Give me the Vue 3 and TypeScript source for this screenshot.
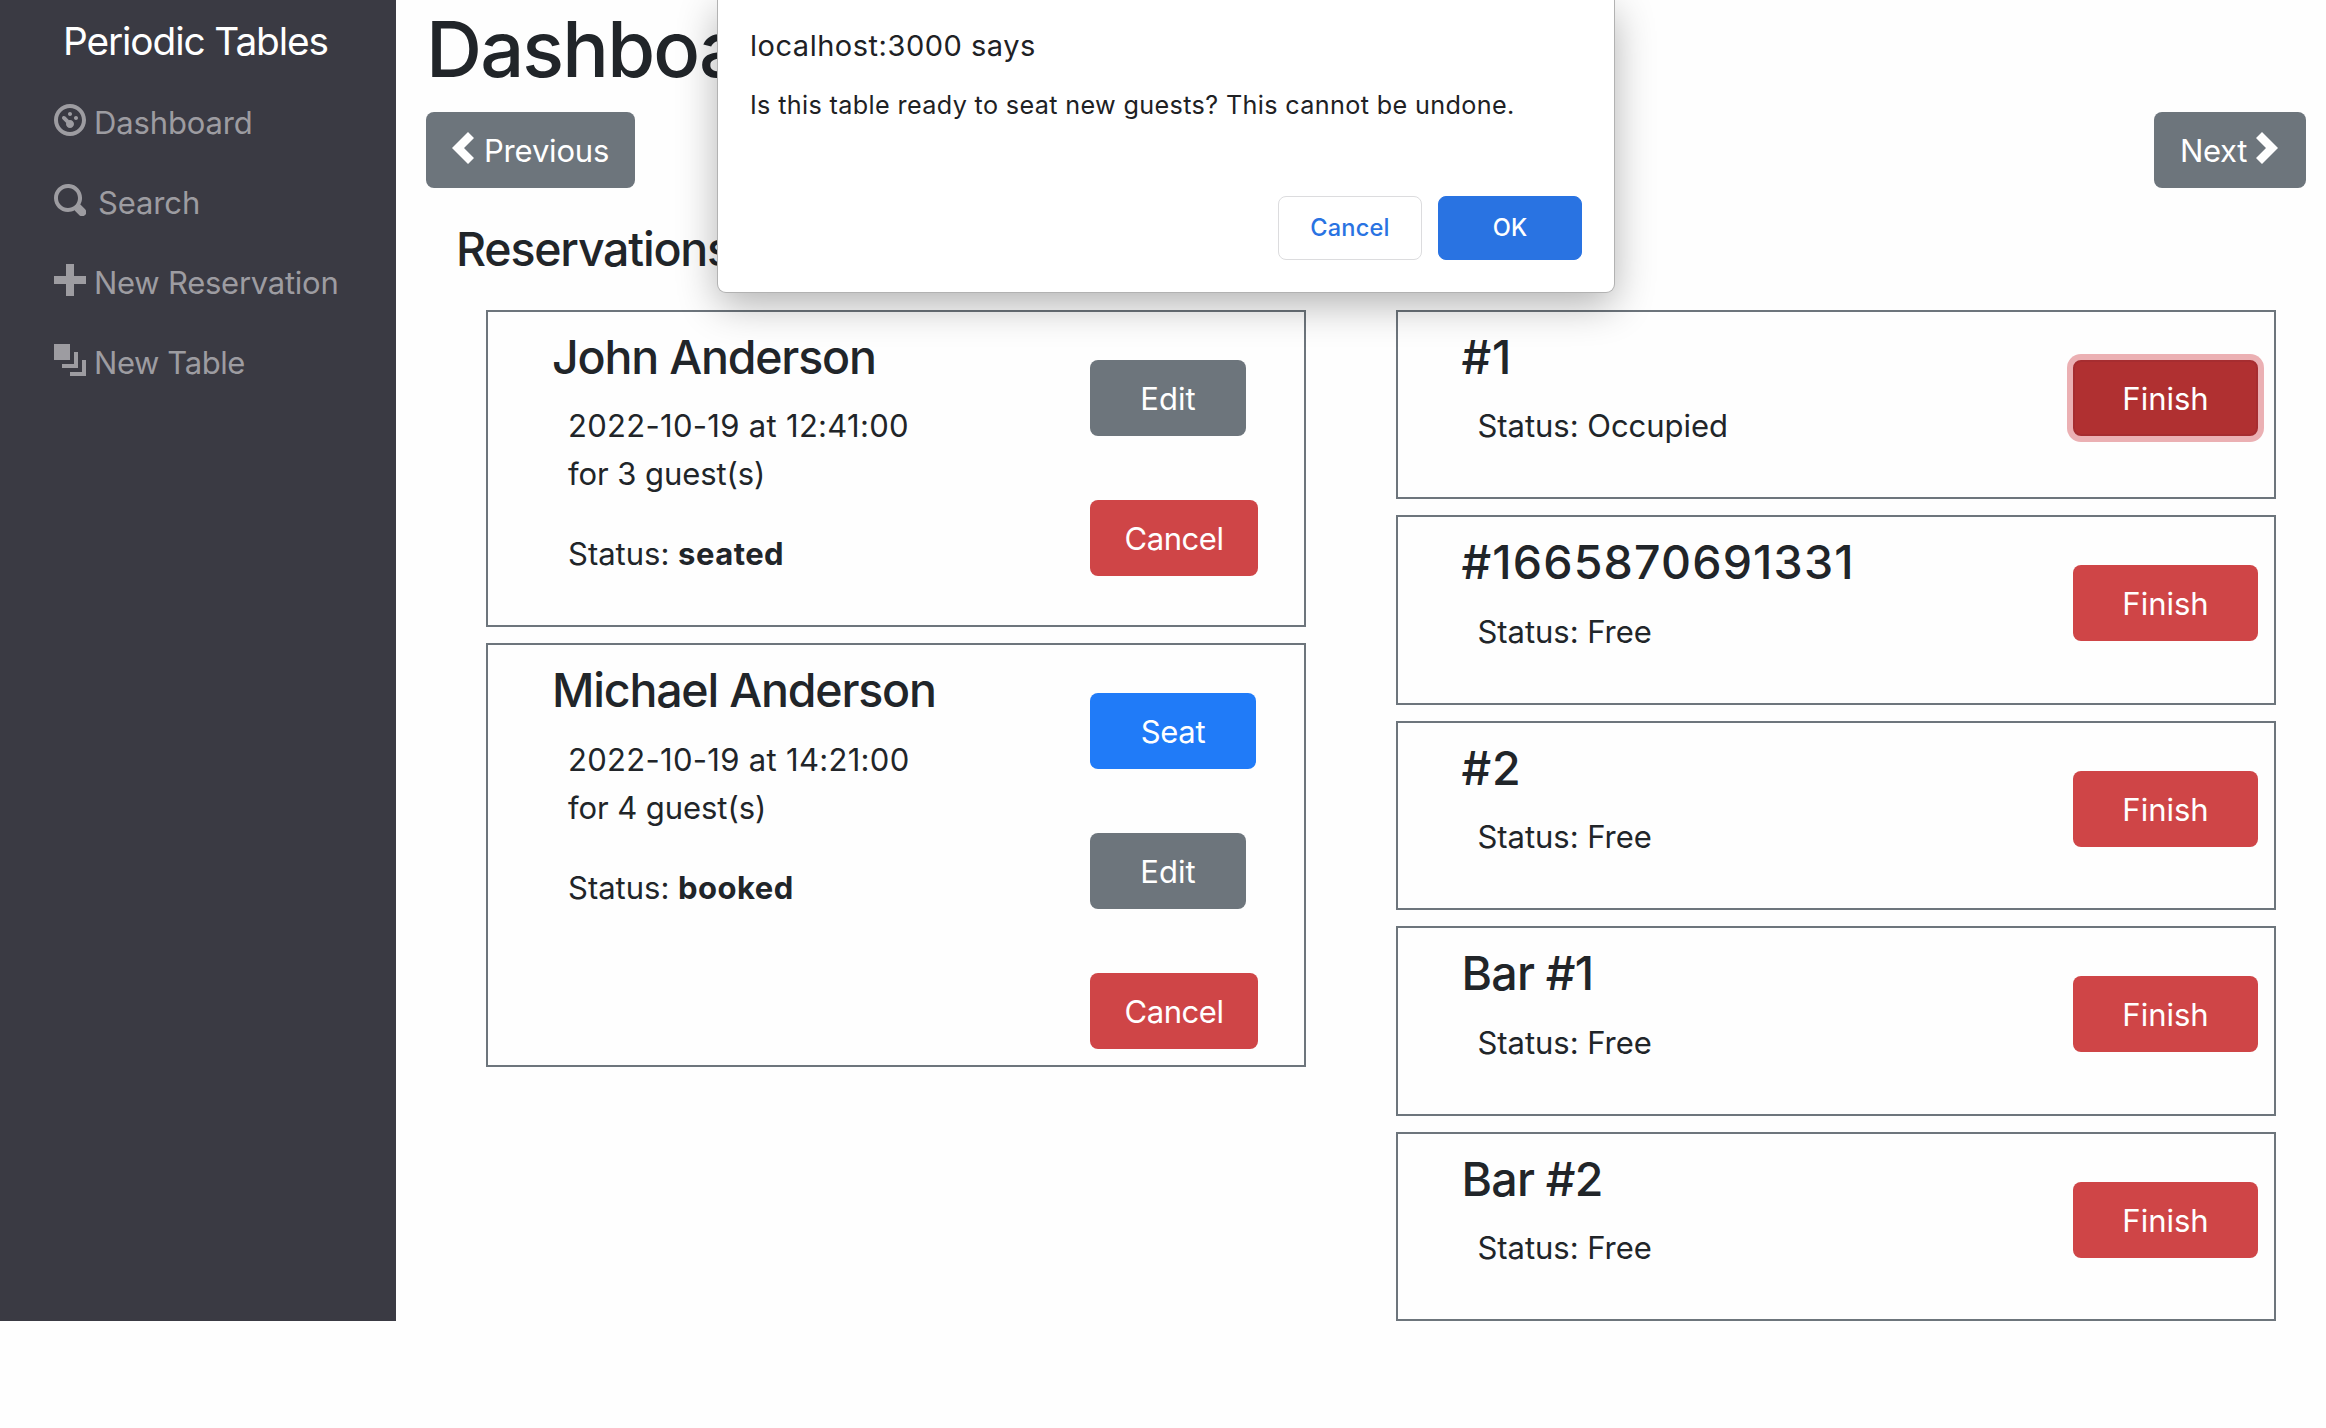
<script setup lang="ts">
interface NavItem {
  label: string
  kind: string
  path: string
}

interface Reservation {
  id: number
  name: string
  date: string
  time: string
  people: number
  status: 'booked' | 'seated'
}

interface Table {
  id: number
  name: string
  status: 'Free' | 'Occupied'
  focused?: boolean
}

const navItems: NavItem[] = [
  {
    label: 'Dashboard',
    kind: 'nav-dashboard',
    path: 'M4 0c-2.2 0-4 1.8-4 4s1.8 4 4 4 4-1.8 4-4-1.8-4-4-4zm0 1c1.66 0 3 1.34 3 3s-1.34 3-3 3-3-1.34-3-3 1.34-3 3-3zm0 1c-.28 0-.5.22-.5.5s.22.5.5.5.5-.22.5-.5-.22-.5-.5-.5zm-1.66 1a.5.5 0 0 0-.19.84l.91.91c-.02.08-.06.16-.06.25 0 .55.45 1 1 1s1-.45 1-1-.45-1-1-1c-.09 0-.17.04-.25.06l-.91-.91a.5.5 0 0 0-.44-.16.5.5 0 0 0-.06 0zm3.16 0c-.28 0-.5.22-.5.5s.22.5.5.5.5-.22.5-.5-.22-.5-.5-.5z',
  },
  {
    label: 'Search',
    kind: 'nav-search',
    path: 'M3.5 0c-1.93 0-3.5 1.57-3.5 3.5s1.57 3.5 3.5 3.5c.59 0 1.17-.14 1.66-.41a1 1 0 0 0 .13.13l1 1a1.02 1.02 0 1 0 1.44-1.44l-1-1a1 1 0 0 0-.16-.13c.27-.49.44-1.06.44-1.66 0-1.93-1.55-3.5-3.5-3.5zm.02 1c1.39 0 2.48 1.1 2.48 2.5 0 .66-.24 1.27-.66 1.72l-.03.03a1 1 0 0 0-.13.13c-.44.4-1.04.63-1.69.63-1.4 0-2.5-1.09-2.5-2.48s1.1-2.52 2.52-2.52z',
  },
  {
    label: 'New Reservation',
    kind: 'nav-reservation',
    path: 'M3 0v3h-3v2h3v3h2v-3h3v-2h-3v-3h-2z',
  },
  {
    label: 'New Table',
    kind: 'nav-table',
    path: 'M0 0v4h4v-4h-4zm5 2v3h-3v1h4v-4h-1zm2 2v3h-3v1h4v-4h-1z',
  },
]

const reservations: Reservation[] = [
  { id: 1, name: 'John Anderson', date: '2022-10-19', time: '12:41:00', people: 3, status: 'seated' },
  { id: 2, name: 'Michael Anderson', date: '2022-10-19', time: '14:21:00', people: 4, status: 'booked' },
]

const tables: Table[] = [
  { id: 1, name: '#1', status: 'Occupied', focused: true },
  { id: 2, name: '#1665870691331', status: 'Free' },
  { id: 3, name: '#2', status: 'Free' },
  { id: 4, name: 'Bar #1', status: 'Free' },
  { id: 5, name: 'Bar #2', status: 'Free' },
]

const nameClass = (name: string): string => {
  if (name.length > 8) return 'digits-long'
  return name.startsWith('#') ? 'digits' : 'mixed'
}
</script>

<template>
  <div class="page">
    <nav class="sidebar">
      <a class="brand">Periodic Tables</a>
      <ul class="nav-list">
        <li v-for="item in navItems" :key="item.label" class="nav-item" :class="item.kind">
          <svg class="nav-icon" viewBox="0 0 8 8"><path :d="item.path" /></svg>
          <span>{{ item.label }}</span>
        </li>
      </ul>
    </nav>

    <main class="main">
      <h1 class="heading">Dashboard</h1>
      <div class="pager">
        <button class="btn secondary previous">
          <svg class="chevron" viewBox="0 0 5.5 8"><path d="M4 0l-4 4 4 4 1.5-1.5-2.5-2.5 2.5-2.5-1.5-1.5z" /></svg>
          <span>Previous</span>
        </button>
        <button class="btn secondary next">
          <span>Next</span>
          <svg class="chevron" viewBox="0 0 5.5 8"><path d="M1.5 0l-1.5 1.5 2.5 2.5-2.5 2.5 1.5 1.5 4-4-4-4z" /></svg>
        </button>
      </div>

      <div class="columns">
        <section>
          <h4 class="column-title">Reservations</h4>
          <div class="cards">
            <article v-for="r in reservations" :key="r.id" class="card">
              <div class="info">
                <h4 class="name">{{ r.name }}</h4>
                <p class="line when">{{ r.date }} at {{ r.time }}</p>
                <p class="line guests">for {{ r.people }} guest(s)</p>
                <p class="line status">Status: <strong>{{ r.status }}</strong></p>
              </div>
              <div class="actions">
                <button v-if="r.status === 'booked'" class="btn primary seat">Seat</button>
                <button class="btn secondary edit">Edit</button>
                <button class="btn danger cancel">Cancel</button>
              </div>
            </article>
          </div>
        </section>

        <section class="tables">
          <div class="cards">
            <article v-for="t in tables" :key="t.id" class="card table-card">
              <div class="info">
                <h4 class="name" :class="nameClass(t.name)">{{ t.name }}</h4>
                <p class="line status">Status: {{ t.status }}</p>
              </div>
              <div class="actions">
                <button class="btn danger finish" :class="{ focused: t.focused }">Finish</button>
              </div>
            </article>
          </div>
        </section>
      </div>
    </main>

    <div class="dialog" role="alertdialog">
      <div class="dialog-title">localhost:3000 says</div>
      <div class="dialog-text">Is this table ready to seat new guests? This cannot be undone.</div>
      <div class="dialog-actions">
        <button class="dialog-btn">Cancel</button>
        <button class="dialog-btn ok">OK</button>
      </div>
    </div>
  </div>
</template>

<style>
body {
  background: #fefefe;
}
</style>

<style scoped>
.page {
  position: relative;
  display: flex;
  width: 2326px;
  font-family: Inter, "Liberation Sans", sans-serif;
  font-size: 31px;
  line-height: 48px;
  color: #212529;
}

h1,
h4,
p,
ul {
  margin: 0;
  padding: 0;
}

button {
  font-family: inherit;
  border: 0;
  margin: 0;
  padding: 0;
}

.sidebar {
  flex: none;
  box-sizing: border-box;
  width: 396px;
  padding-top: 11px;
  background: #3a3a43;
}

.brand {
  display: block;
  margin: 0 0 11.7px 63px;
  font-size: 38.8px;
  font-weight: 430;
  line-height: 60px;
  letter-spacing: -1.11px;
  color: #fff;
}

.nav-list {
  list-style: none;
}

.nav-item {
  display: flex;
  align-items: flex-start;
  gap: 8px;
  padding: 16px 0 16px 54px;
  letter-spacing: -0.13px;
  white-space: nowrap;
  color: #9d9ca1;
}

.nav-search {
  gap: 12px;
}

.nav-reservation {
  letter-spacing: -0.26px;
}

.nav-table {
  letter-spacing: -0.41px;
}

.nav-icon {
  width: 32px;
  height: 32px;
  margin-top: 5.3px;
  fill: currentColor;
}

.main {
  flex: 1;
  padding: 3px 20px 0 30px;
}

.heading {
  margin-bottom: 16px;
  font-size: 77.6px;
  font-weight: 550;
  line-height: 93px;
  letter-spacing: -1.85px;
}

.pager {
  display: flex;
  justify-content: space-between;
}

.btn {
  box-sizing: border-box;
  height: 76px;
  padding-top: 2px;
  border-radius: 8px;
  font-size: 31px;
  line-height: 48px;
  text-align: center;
  color: #fff;
}

.primary {
  background: #207bf8;
}

.secondary {
  background: #6d757c;
}

.danger {
  background: #cf4547;
}

.previous,
.next {
  display: flex;
  align-items: flex-start;
  padding: 15px 26px 0;
}

.previous {
  gap: 10px;
  width: 209px;
  letter-spacing: -0.18px;
}

.next {
  gap: 9px;
  width: 152px;
  letter-spacing: -0.32px;
}

.chevron {
  flex: none;
  width: 22px;
  height: 32px;
  margin-top: 5px;
  fill: currentColor;
}

.columns {
  display: grid;
  grid-template-columns: 820px 880px;
  column-gap: 90px;
  align-items: start;
  padding: 33px 0 0 60px;
}

.column-title {
  margin: 0 0 31.4px -30px;
  font-size: 46.5px;
  font-weight: 550;
  line-height: 57.5px;
  letter-spacing: -1.2px;
}

.tables {
  padding-top: 88.9px;
}

.cards {
  display: flex;
  flex-direction: column;
  gap: 16px;
}

.card {
  display: flex;
  border: 2px solid #6d757c;
}

.info {
  box-sizing: border-box;
  width: 602px;
  padding: 17px 0 15px 64px;
}

.name {
  margin-bottom: 16px;
  font-size: 46.5px;
  font-weight: 550;
  line-height: 57.5px;
  letter-spacing: -1.2px;
}

.name.mixed {
  letter-spacing: -0.75px;
}

.name.digits {
  letter-spacing: 0.8px;
}

.name.digits-long {
  letter-spacing: 1.16px;
}

.line {
  padding-left: 16px;
}

.when {
  letter-spacing: 0.3px;
}

.guests {
  margin-bottom: 32px;
  letter-spacing: -0.07px;
}

.status {
  margin-bottom: 32px;
}

.table-card .status {
  letter-spacing: -0.04px;
}

.status strong {
  font-weight: 700;
  letter-spacing: 0.48px;
}

.actions {
  display: flex;
  flex-direction: column;
  gap: 64px;
  padding: 48px 0 16px;
}

.seat {
  width: 166px;
  letter-spacing: -0.32px;
}

.edit {
  width: 156px;
}

.cancel {
  width: 168px;
  letter-spacing: -0.43px;
}

.finish {
  width: 185px;
}

.table-card {
  justify-content: space-between;
  padding-right: 16px;
}

.table-card .info {
  padding-left: 63.5px;
}

.table-card .actions {
  padding-bottom: 0;
}

.focused {
  border: 2px solid #a62d30;
  background: #b03031;
  line-height: 44px;
  box-shadow: 0 0 0 6px #ebb0b3;
}

.dialog {
  position: absolute;
  top: 0;
  left: 718px;
  box-sizing: border-box;
  width: 896px;
  height: 292px;
  padding: 26px 32px 32px;
  display: flex;
  flex-direction: column;
  border-radius: 0 0 8px 8px;
  background: #fff;
  box-shadow: 0 0 0 1px #b2b2b2, 0 12px 40px rgba(0, 0, 0, 0.31);
  color: #202124;
}

.dialog-title {
  font-size: 29px;
  line-height: 40px;
  letter-spacing: 0.52px;
}

.dialog-text {
  margin-top: 21px;
  font-size: 25.2px;
  line-height: 36px;
  letter-spacing: 0.355px;
  white-space: nowrap;
}

.dialog-actions {
  display: flex;
  justify-content: flex-end;
  gap: 16px;
  margin-top: auto;
}

.dialog-btn {
  box-sizing: border-box;
  width: 144px;
  height: 64px;
  padding-bottom: 2px;
  border: 1px solid #dcdcde;
  border-radius: 8px;
  background: #fff;
  font-size: 23.6px;
  font-weight: 550;
  letter-spacing: 0.2px;
  color: #2973e2;
}

.dialog-btn.ok {
  border-color: #2973e2;
  background: #2973e2;
  color: #fff;
}
</style>
